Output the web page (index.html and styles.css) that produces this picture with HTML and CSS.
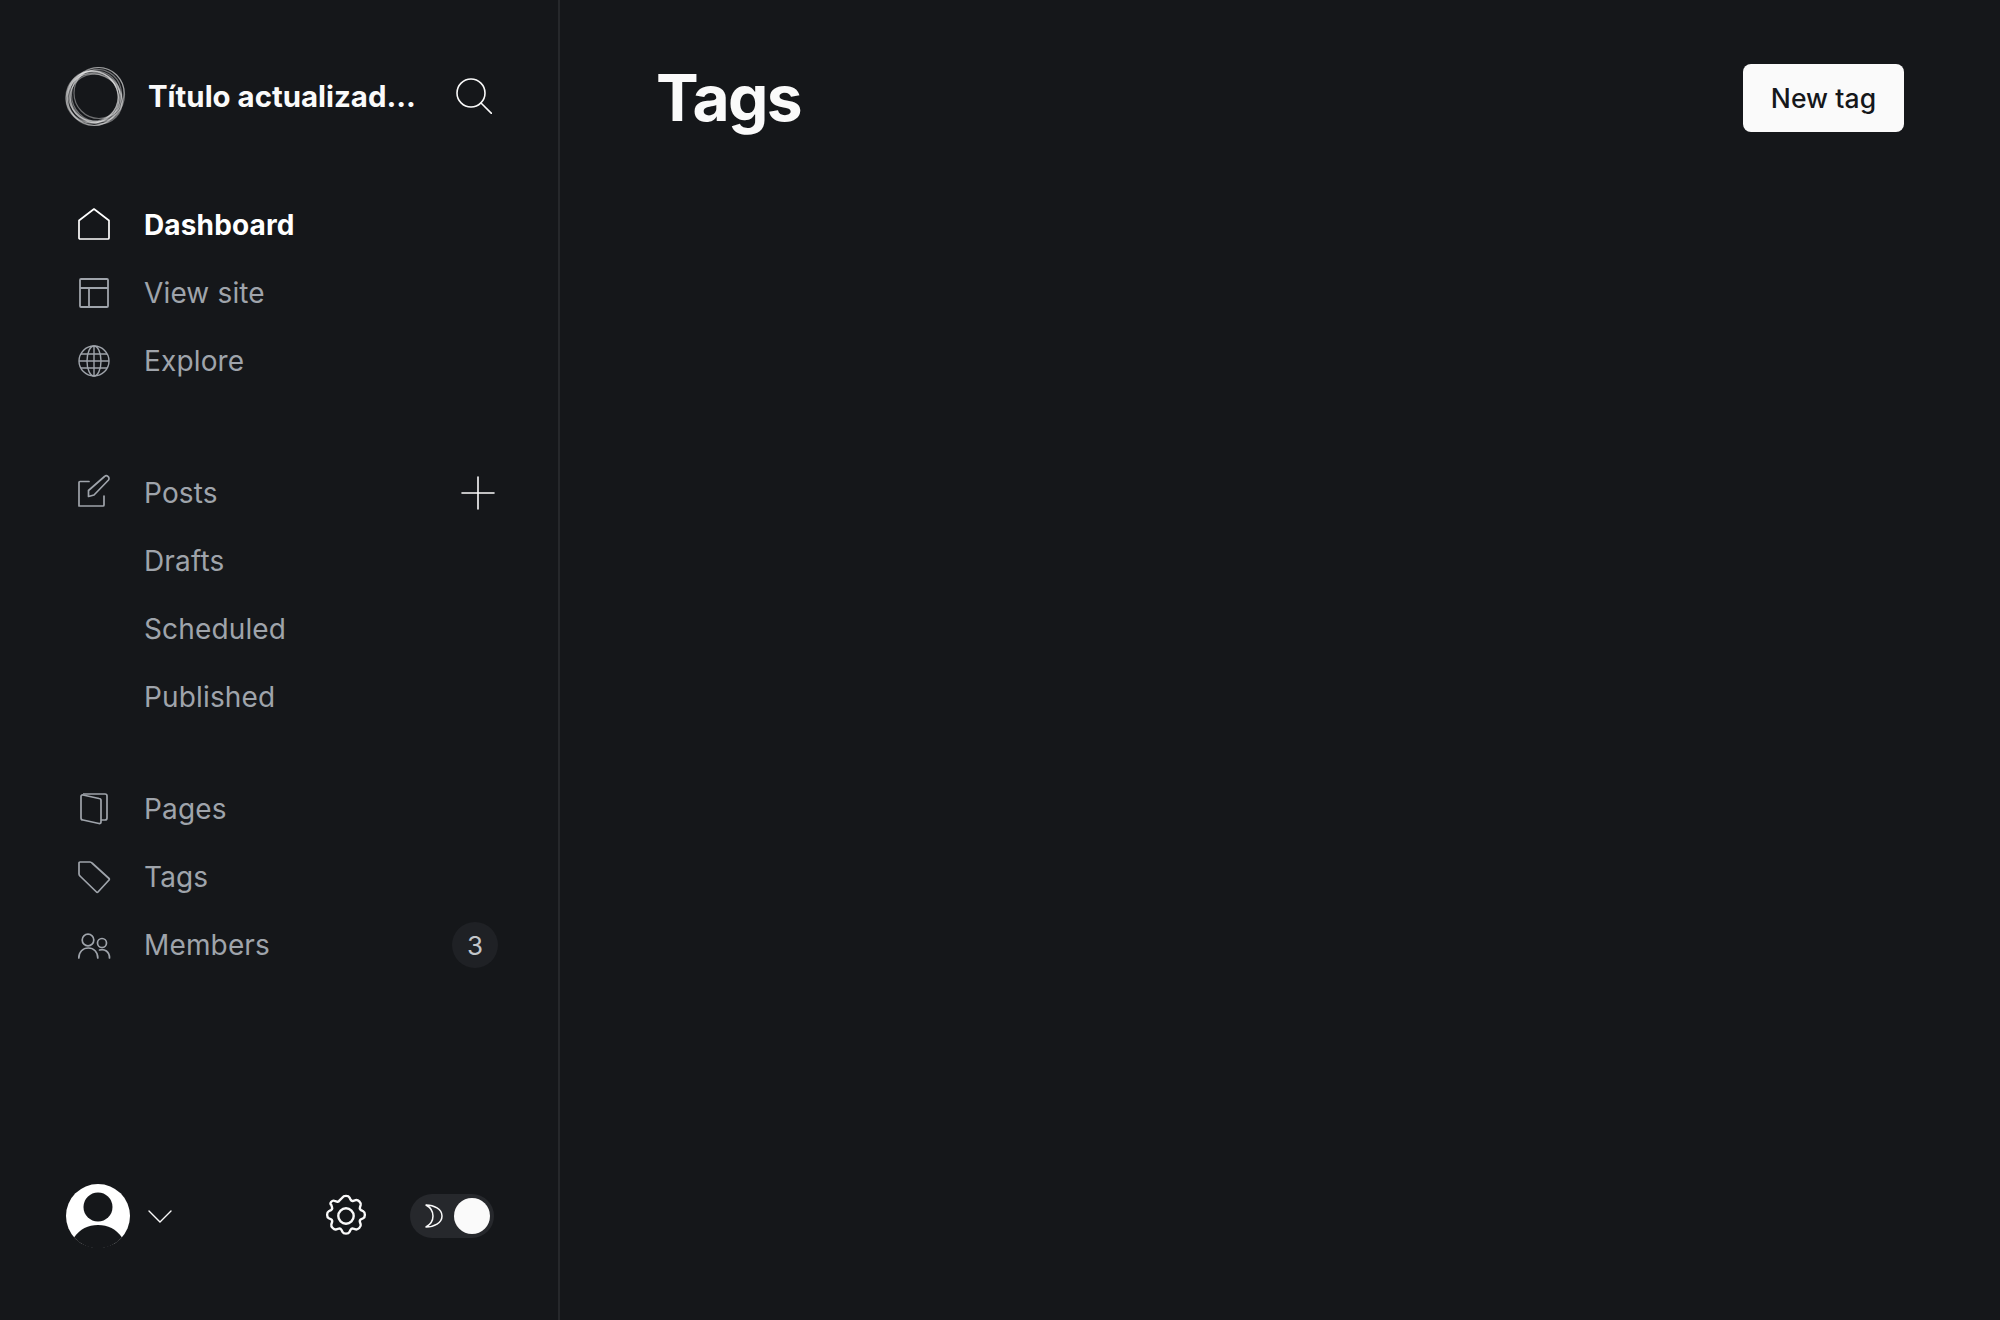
FILE: index.html
```html
<!DOCTYPE html>
<html lang="en">
<head>
<meta charset="utf-8">
<title>Tags</title>
<link rel="stylesheet" href="styles.css">
</head>
<body>
<div class="app">
  <aside class="sidebar">
    <header class="brand">
      <svg class="logo" viewBox="0 0 60 60" fill="none">
        <g stroke="#fff" stroke-width="1.200" stroke-opacity=".38">
          <ellipse cx="29" cy="31.500" rx="24.500" ry="23.500" transform="rotate(-20 29 31.500)"/>
          <ellipse cx="28" cy="31" rx="27.500" ry="25.500" transform="rotate(-35 28 31)"/>
          <ellipse cx="27" cy="31" rx="26" ry="25.500"/>
          <ellipse cx="29" cy="33" rx="26.500" ry="26.500"/>
          <ellipse cx="33" cy="28.500" rx="26.500" ry="27"/>
          <ellipse cx="34" cy="27" rx="25" ry="25.500"/>
          <ellipse cx="31" cy="31.500" rx="28" ry="24.500" transform="rotate(45 31 31.500)"/>
          <ellipse cx="30" cy="32" rx="27.500" ry="23.500" transform="rotate(25 30 32)"/>
          <ellipse cx="31" cy="30" rx="27" ry="25" transform="rotate(-60 31 30)"/>
          <ellipse cx="28" cy="32" rx="27.500" ry="25.500" transform="rotate(70 28 32)"/>
        </g>
      </svg>
      <span class="brand-title">Título actualizad...</span>
      <svg class="search" viewBox="0 0 36 36" fill="none" stroke="#fafafa" stroke-width="1.600" stroke-linecap="round">
        <circle cx="15" cy="15" r="14"/>
        <path d="M25 25l11 11"/>
      </svg>
    </header>

    <nav class="nav">
      <ul class="group">
        <li class="row is-active">
          <svg class="icon" viewBox="0 0 32 32" fill="none" stroke="currentColor" stroke-width="1.700" stroke-linejoin="round"><path d="M1 12.500 16 1l15 11.500V30a1 1 0 0 1-1 1H2a1 1 0 0 1-1-1z"/></svg>
          <span class="label">Dashboard</span>
        </li>
        <li class="row">
          <svg class="icon" viewBox="0 0 32 32" fill="none" stroke="currentColor" stroke-width="1.800" stroke-linejoin="round"><rect x="2" y="3" width="28" height="28" rx="1"/><path d="M2 12h28M11 12v19"/></svg>
          <span class="label">View site</span>
        </li>
        <li class="row">
          <svg class="icon" viewBox="0 0 32 32" fill="none" stroke="currentColor" stroke-width="1.400"><circle cx="16" cy="17" r="15"/><ellipse cx="16" cy="17" rx="7" ry="15"/><path d="M16 2v30M3 10h26M1 17h30M3 24h26"/></svg>
          <span class="label">Explore</span>
        </li>
      </ul>

      <ul class="group group-tight">
        <li class="row">
          <svg class="icon" viewBox="0 0 32 32" fill="none" stroke="currentColor" stroke-width="1.700" stroke-linecap="round" stroke-linejoin="round"><path d="M11 5.500H2a1 1 0 0 0-1 1V30h24a1 1 0 0 0 1-1v-9"/><path d="M10.500 14.500 26.500.5a2.500 2.500 0 0 1 3.500 0 2.500 2.500 0 0 1 .5 3.500L16 19l-5.500 1.500z"/></svg>
          <span class="label">Posts</span>
          <svg class="plus" viewBox="0 0 34 34" fill="none" stroke="#fafafa" stroke-width="1.600" stroke-linecap="round"><path d="M17 1v32M1 17h32"/></svg>
        </li>
        <li class="row"><span class="label sub">Drafts</span></li>
        <li class="row"><span class="label sub">Scheduled</span></li>
        <li class="row"><span class="label sub">Published</span></li>
      </ul>

      <ul class="group">
        <li class="row">
          <svg class="icon" viewBox="0 0 32 32" fill="none" stroke="currentColor" stroke-width="1.700" stroke-linejoin="round"><path d="M5 2h22a2 2 0 0 1 2 2v22a2 2 0 0 1-2 2h-4"/><path d="M3 4.500a1.500 1.500 0 0 1 2-1.500l16 3.500a2 2 0 0 1 2 2V30a1.500 1.500 0 0 1-2 1.500L5 28a2 2 0 0 1-2-2z"/></svg>
          <span class="label">Pages</span>
        </li>
        <li class="row">
          <svg class="icon" viewBox="0 0 32 32" fill="none" stroke="currentColor" stroke-width="1.700" stroke-linejoin="round"><path d="M2 2h10a3 3 0 0 1 2 1l17 15.500a1 1 0 0 1 0 1.500L20 32a1 1 0 0 1-1.500 0L2 16a3 3 0 0 1-1-2V3a1 1 0 0 1 1-1z"/></svg>
          <span class="label">Tags</span>
        </li>
        <li class="row">
          <svg class="icon" viewBox="0 0 32 32" fill="none" stroke="currentColor" stroke-width="1.700" stroke-linecap="round"><circle cx="10" cy="12" r="5.800"/><path d="M.8 30c0-6 4-10 9.500-10s9.500 4 9.500 10"/><circle cx="24" cy="15" r="4.500"/><path d="M21.500 22c5-1.500 10 1.500 10 8"/></svg>
          <span class="label">Members</span>
          <span class="badge">3</span>
        </li>
      </ul>
    </nav>

    <footer class="foot">
      <div class="avatar">
        <svg viewBox="0 0 64 64"><circle cx="32" cy="32" r="32" fill="#fff"/><circle cx="32" cy="23" r="14.500" fill="#15171a"/><path d="M8 53.500C14 45 22 41 32 41s18 4 24 12.500A32 32 0 0 1 8 53.500z" fill="#15171a"/></svg>
      </div>
      <svg class="chevron" viewBox="0 0 24 14" fill="none" stroke="#fafafa" stroke-width="1.400" stroke-linecap="round"><path d="M1 1l11 11L23 1"/></svg>
      <svg class="gear" viewBox="0 0 24 24" fill="none" stroke="#fafafa" stroke-width="1.300" stroke-linejoin="round"><circle cx="12" cy="12" r="4.200"/><path d="M10.100 1.900c.6-1.200 3.200-1.200 3.800 0l.6 1.200c.3.500.9.800 1.500.6l1.300-.4c1.300-.4 3 1.500 2.700 2.700l-.4 1.300c-.2.600.1 1.200.6 1.500l1.200.6c1.200.6 1.200 3.200 0 3.800l-1.200.6c-.5.300-.8.900-.6 1.500l.4 1.300c.4 1.300-1.500 3-2.700 2.700l-1.300-.4c-.6-.2-1.200.1-1.500.6l-.6 1.200c-.6 1.200-3.200 1.200-3.800 0l-.6-1.200c-.3-.5-.9-.8-1.500-.6l-1.300.4c-1.300.4-3-1.500-2.700-2.700l.4-1.300c.2-.6-.1-1.200-.6-1.500l-1.200-.6c-1.200-.6-1.200-3.200 0-3.800l1.200-.6c.5-.3.8-.9.6-1.500l-.4-1.300C2.600 5 4.500 3.300 5.700 3.700l1.300.4c.6.2 1.200-.1 1.500-.6z"/></svg>
      <div class="toggle">
        <svg class="moon" viewBox="0 0 18 24" fill="none" stroke="#fafafa" stroke-width="1.500" stroke-linejoin="round"><path d="M1 1c8 0 16 4 16 11S9 23 1 23c4.500-2.500 7-6.500 7-11S5.500 3.500 1 1z"/></svg>
        <span class="knob"></span>
      </div>
    </footer>
  </aside>

  <main class="main">
    <h1 class="title">Tags</h1>
    <button class="new" type="button">New tag</button>
  </main>
</div>
</body>
</html>
```
FILE: styles.css
```css
* { box-sizing: border-box; }
html, body { margin: 0; height: 100%; }
body {
  background: #15171a;
  color: #fafafa;
  font-family: Inter, "Liberation Sans", sans-serif;
}
.app { display: flex; height: 1320px; }
.sidebar {
  width: 560px;
  flex: none;
  border-right: 2px solid #26282b;
  display: flex;
  flex-direction: column;
  padding: 64px 64px 0 64px;
}
.brand { display: flex; align-items: center; height: 64px; }
.logo { width: 60px; height: 60px; flex: none; margin-left: 1px; margin-right: -1px; overflow: visible; }
.brand-title {
  margin-left: 24px;
  width: 268px;
  flex: none;
  font-size: 29.400px;
  font-weight: 700;
  white-space: nowrap;
}
.search { width: 36px; height: 36px; margin-left: 40px; flex: none; }
.nav { margin-top: 63px; }
.group { list-style: none; margin: 0 0 64px; padding: 0; }
.group-tight { margin-bottom: 44px; }
.row {
  display: flex;
  align-items: center;
  height: 68px;
  color: #9fa4ab;
  padding-left: 14px;
}
.row.is-active { color: #fff; font-weight: 700; }
.icon { width: 32px; height: 32px; flex: none; margin: 0 34px 2px 0; overflow: visible; }
.label { font-size: 28px; letter-spacing: .15px; }
.sub { margin-left: 66px; }
.plus { width: 34px; height: 34px; margin-left: auto; margin-right: -1px; flex: none; }
.badge {
  margin-left: auto;
  margin-right: -4px;
  width: 46px;
  height: 46px;
  border-radius: 50%;
  background: #1f2125;
  color: #c3c6ca;
  font-size: 26px;
  display: flex;
  align-items: center;
  justify-content: center;
}
.foot { margin-top: auto; display: flex; align-items: center; height: 64px; margin-bottom: 72px; padding-left: 2px; }
.avatar { width: 64px; height: 64px; flex: none; }
.avatar svg { display: block; width: 64px; height: 64px; }
.chevron { width: 24px; height: 14px; margin: 2px 0 0 18px; flex: none; }
.gear { width: 44px; height: 44px; margin-left: auto; flex: none; }
.toggle {
  width: 84px;
  height: 44px;
  margin-left: 42px;
  border-radius: 22px;
  background: #26282c;
  display: flex;
  align-items: center;
  justify-content: space-between;
  padding: 0 4px 0 15px;
}
.moon { width: 18px; height: 24px; flex: none; }
.knob { width: 36px; height: 36px; border-radius: 50%; background: #fafafa; }
.main {
  flex: 1;
  display: flex;
  justify-content: space-between;
  align-items: flex-start;
  padding: 64px 96px 0 96px;
}
.title { margin: 0; font-size: 64px; line-height: 68px; font-weight: 700; letter-spacing: -1.6px; color: #fafafa; }
.new {
  width: 161px;
  height: 68px;
  border: 0;
  border-radius: 8px;
  background: #fafafa;
  color: #15171a;
  font: 500 26.500px Inter, "Liberation Sans", sans-serif;
  letter-spacing: .1px;
}
```
